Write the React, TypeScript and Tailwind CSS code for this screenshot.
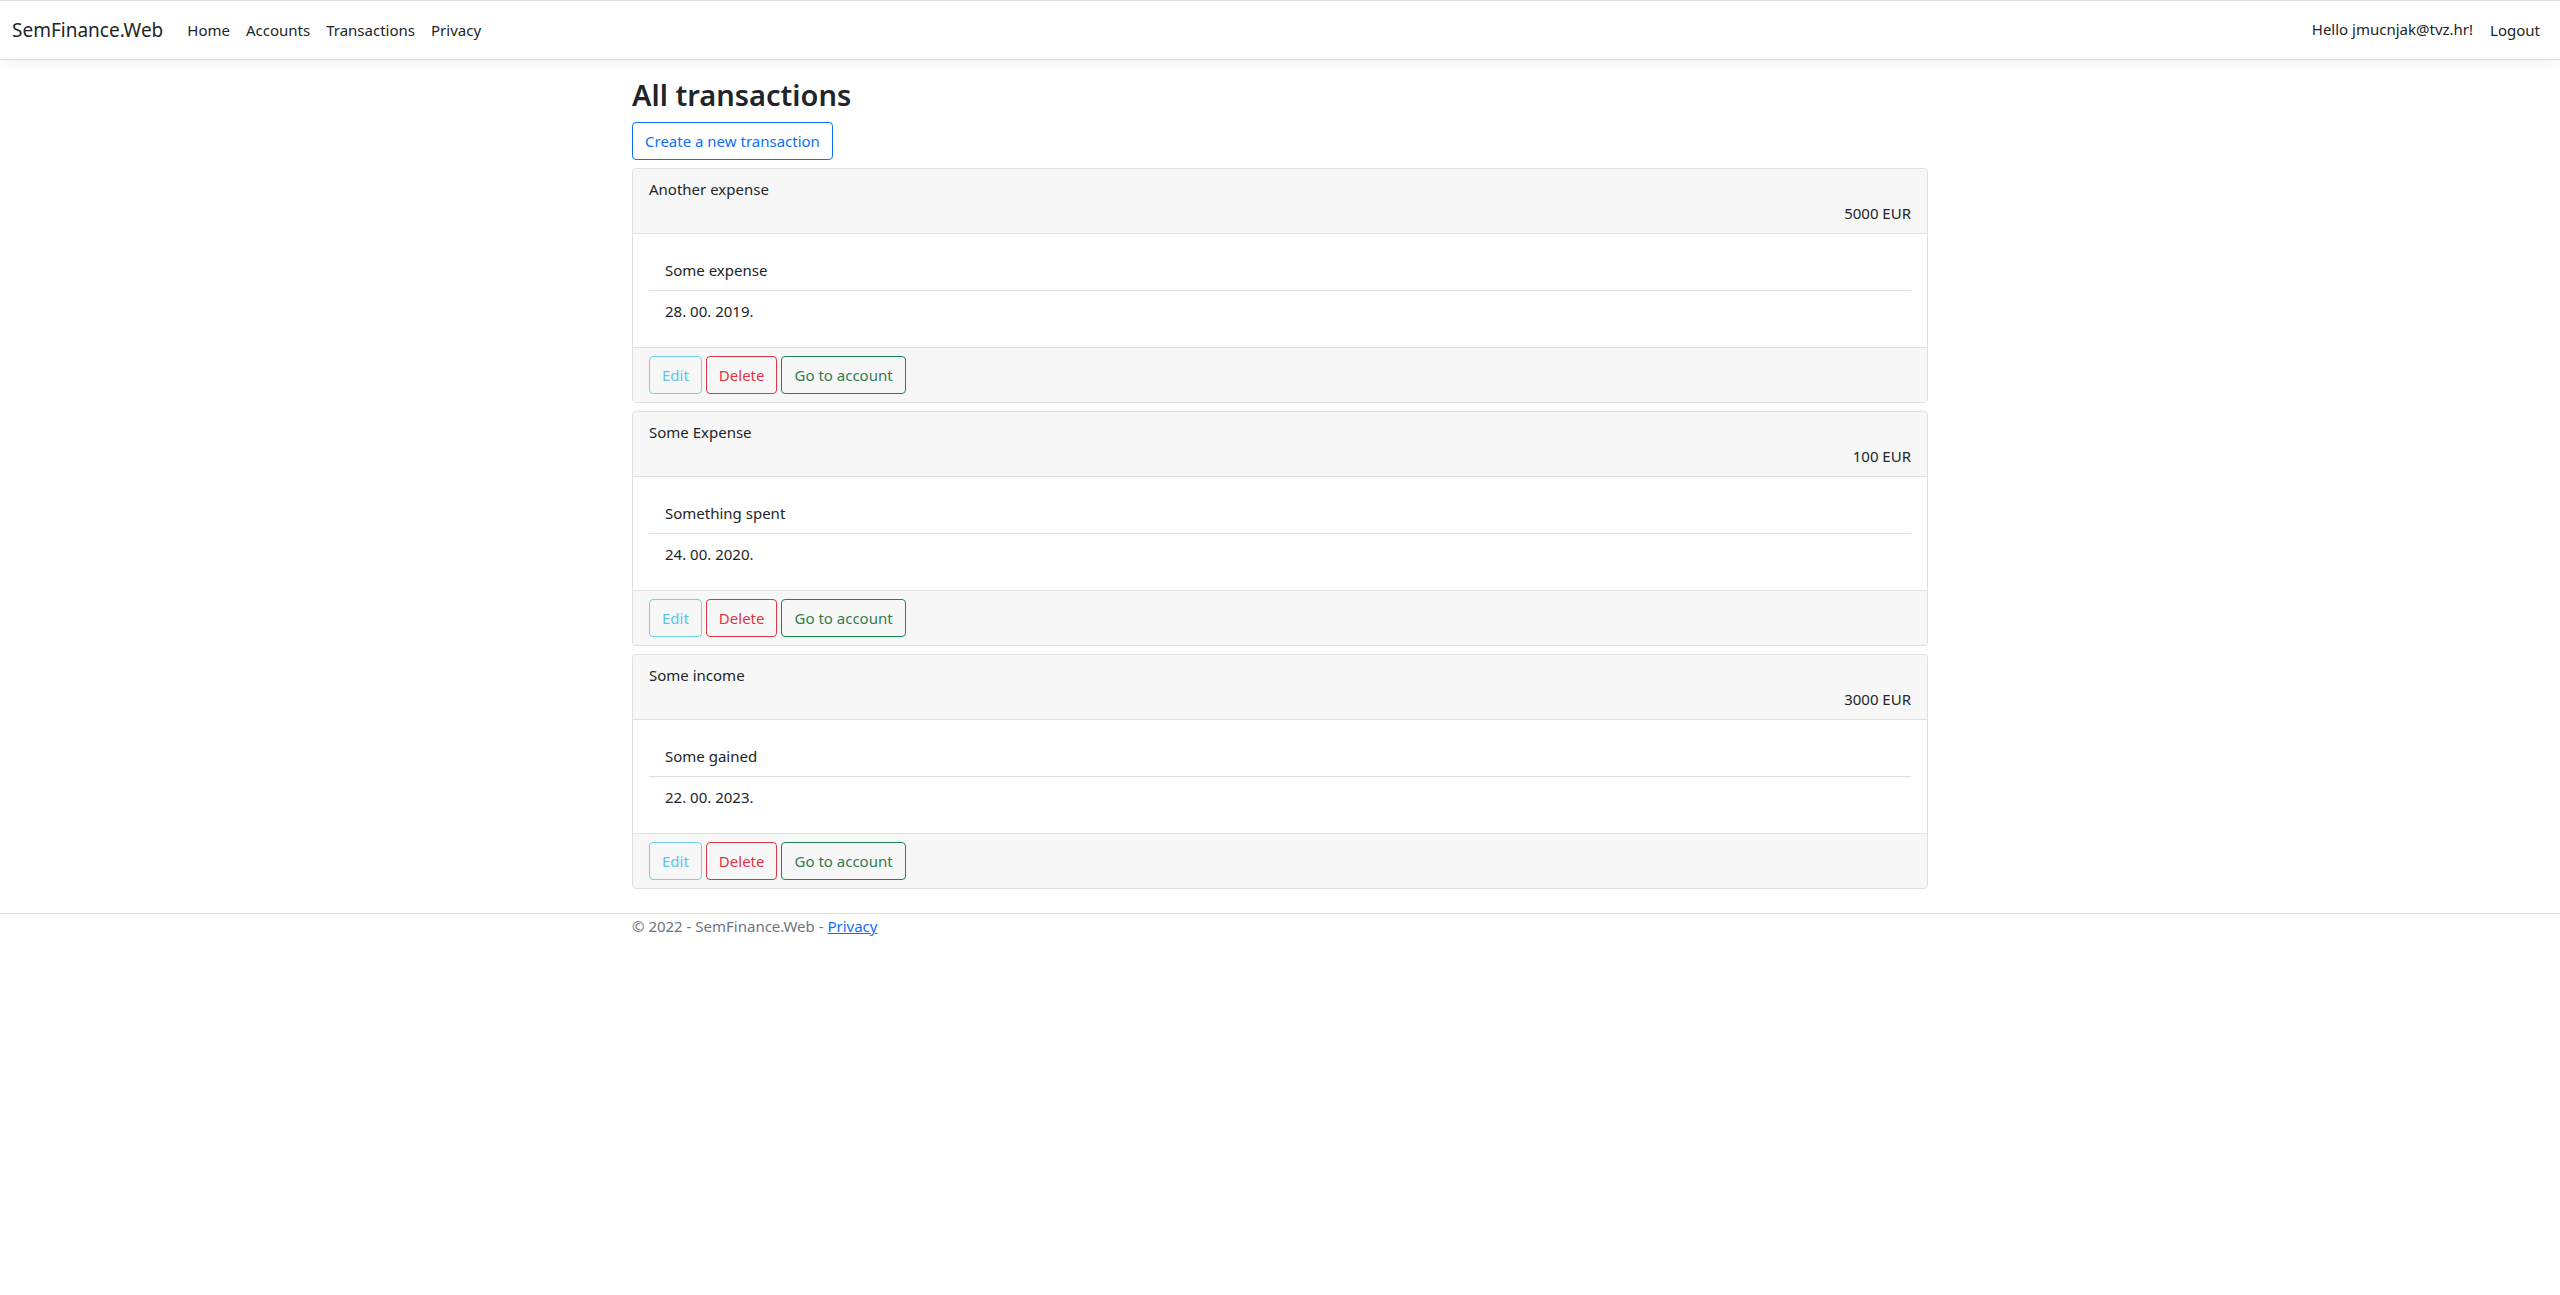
import React from "react";

type Tx = {
  title: string;
  amount: string;
  description: string;
  date: string;
};

const transactions: Tx[] = [
  { title: "Another expense", amount: "5000 EUR", description: "Some expense", date: "28. 00. 2019." },
  { title: "Some Expense", amount: "100 EUR", description: "Something spent", date: "24. 00. 2020." },
  { title: "Some income", amount: "3000 EUR", description: "Some gained", date: "22. 00. 2023." },
];

export default function App() {
  return (
    <div
      className="min-h-screen bg-white text-[15px] leading-6 text-[#212529]"
      style={{ fontFamily: '"Noto Sans", "Open Sans", sans-serif' }}
    >
      <header className="border-t border-b border-[#dfdfdf] bg-white shadow-[0_4px_12px_rgba(0,0,0,0.05)]">
        <nav className="flex h-[58px] items-center justify-between px-3">
          <div className="flex items-center">
            <a className="mr-4 text-[19px] leading-[30px] text-[#212529]">SemFinance.Web</a>
            <ul className="flex items-center">
              {["Home", "Accounts", "Transactions", "Privacy"].map((item) => (
                <li key={item}>
                  <a className="block px-2 py-2 text-[#212529]">{item}</a>
                </li>
              ))}
            </ul>
          </div>
          <div className="flex items-center">
            <a className="-mt-0.5 block px-2 py-2 text-[#212529]">Hello jmucnjak@tvz.hr!</a>
            <button className="ml-px block px-2 py-2 text-[#212529]">Logout</button>
          </div>
        </nav>
      </header>

      <main className="mx-auto mt-4 w-[1320px] px-3 pb-4">
        <h1 className="mb-2 text-[29px] font-semibold leading-[38px]">All transactions</h1>
        <button className="mb-2 h-[38px] rounded border border-[#0d6efd] px-3 text-[#0d6efd]">
          Create a new transaction
        </button>

        {transactions.map((tx) => (
          <div key={tx.title} className="mb-2 rounded border border-[#dfdfdf]">
            <div className="rounded-t border-b border-[#dfdfdf] bg-[#f7f7f7] px-4 py-2">
              <div>{tx.title}</div>
              <div className="text-right">{tx.amount}</div>
            </div>
            <div className="p-4">
              <ul>
                <li className="h-[41px] border-b border-[#dfdfdf] px-4 py-2">{tx.description}</li>
                <li className="h-10 px-4 py-2">{tx.date}</li>
              </ul>
            </div>
            <div className="flex gap-1 rounded-b border-t border-[#dfdfdf] bg-[#f7f7f7] px-4 py-2">
              <button className="h-[38px] rounded border border-[#6fd3ef] px-3 text-[#5cc4e8]">Edit</button>
              <button className="h-[38px] rounded border border-[#dc3545] px-3 text-[#dc3545]">Delete</button>
              <button className="h-[38px] rounded border border-[#198754] px-3 text-[#2f7d4f]">Go to account</button>
            </div>
          </div>
        ))}
      </main>

      <footer className="border-t border-[#dfdfdf] text-[#6c757d]">
        <div className="mx-auto w-[1320px] px-3">
          © 2022 - SemFinance.Web - <a className="text-[#0d6efd] underline">Privacy</a>
        </div>
      </footer>
    </div>
  );
}
